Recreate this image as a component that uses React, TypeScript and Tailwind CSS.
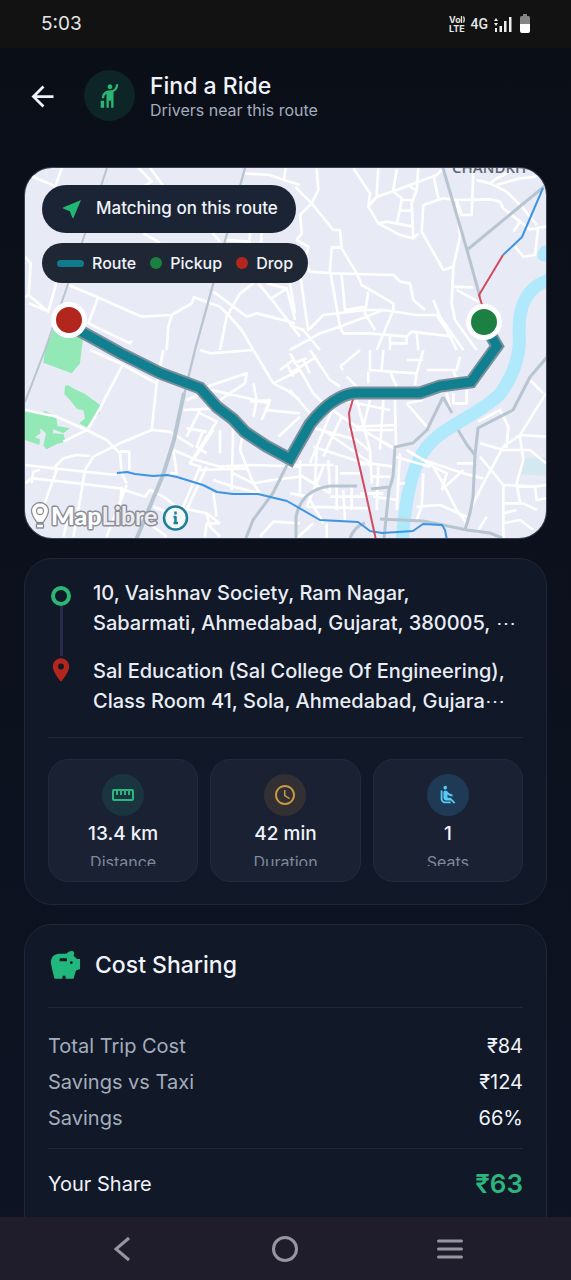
import type { ReactNode } from 'react';
import {
  MdAirlineSeatReclineNormal,
  MdArrowBack,
  MdHail,
  MdNearMe,
  MdPlace,
  MdSavings,
  MdSchedule,
  MdStraighten,
} from 'react-icons/md';

function StatusBar() {
  return (
    <div className="flex h-12 shrink-0 items-center justify-between bg-[#121212] px-[41px] text-[#e6e6e6]">
      <span className="text-[19px]">5:03</span>
      <div className="flex items-center gap-1.5">
        <svg width="16" height="18" viewBox="0 0 16 18" fill="#e6e6e6" aria-label="VoLTE">
          <text x="0" y="8" fontFamily="Inter, sans-serif" fontSize="9" fontWeight="700">Vo</text>
          <path d="M12.500 1v7M14.500 1.500q1.500 3 0 6" stroke="#e6e6e6" strokeWidth="1.300" fill="none" />
          <text x="0" y="17" fontFamily="Inter, sans-serif" fontSize="9" fontWeight="700">LTE</text>
        </svg>
        <span className="font-[Roboto,sans-serif] text-sm font-medium">4G</span>
        <svg width="18" height="18" viewBox="0 0 18 18" fill="#ededed" aria-hidden="true">
          <path d="M0 6l2-3 2 3zM0 8h4l-2 3zM1 13h2v4H1zM5.500 11H8v6H5.500zM10 6h2.500v11H10zM15 2h2.500v15H15z" />
        </svg>
        <svg className="ml-0.5" width="10" height="20" viewBox="0 0 10 20" aria-hidden="true">
          <path d="M3 0h4v2h1.500Q10 2 10 4v7H0V4q0-2 1.500-2H3z" fill="#858585" />
          <path d="M0 10h10v7q0 2-2 2H2q-2 0-2-2z" fill="#fff" />
        </svg>
      </div>
    </div>
  );
}

function CityMap() {
  return (
    <svg
      className="block h-full w-full"
      viewBox="25 168 521 370"
      preserveAspectRatio="xMidYMid slice"
      role="img"
      aria-label="Route map"
      fill="none"
      strokeLinejoin="round"
    >
      <rect x="0" y="140" width="600" height="430" fill="#e8eaf6" />

      {/* parks and lake */}
      <g transform="translate(20 350) scale(.33333)" fill="#93e9b6">
        <path d="M75 0L70 38L155 70L180 40L190-45L100-60Z" />
        <path d="M135 108L143 105L165 118L195 132L240 165L240 188L200 232L178 220L195 205L190 180L172 178L150 150L133 132Z" />
        <path d="M15 180L60 190L75 183L108 198L113 228L150 235L130 250L100 238L98 250L130 252L138 275L110 282L80 298L70 288L78 250L60 235L62 250L45 262L60 268L58 285L15 270Z" />
      </g>
      <path d="M522 459L546 457V476L520 474Z" fill="#d3e8f0" />

      {/* river */}
      <path d="M552 279C526 286 519 306 519 330C521 350 516 372 500 394C478 416 447 423 426 448C411 468 405 500 402 545" stroke="#b0e9fb" strokeWidth="13" />
      <path d="M550 243L541 247Q534 256 541 261L550 262Z" fill="#b0e9fb" />

      {/* streets */}
      <g stroke="#fff" strokeWidth="8">
        <path
          transform="translate(20 160) scale(.33333)"
          d="M126 23L104 85M15 40L104 78M355 23L395 65L370 80M390 23L430 78M675 40L750 45L792 60L840 75M797 23L792 60M370 220L420 248M575 215L600 245M620 240L690 245M690 215L688 248M725 215L723 248M15 290L32 310L26 405L15 412M26 405L85 455L110 365M26 430L80 452M145 375L230 410L365 470L455 465L515 430L522 412L600 440L625 465L665 510L700 570M235 410L205 490L330 550L335 542M455 465L445 500L440 570M700 370L660 400L620 470L600 570M580 395L680 470L710 460L750 470L825 490M715 370L760 425L810 490L840 530M740 370L800 385L755 415M800 385L815 440L825 480"
        />
        <path
          transform="translate(290 160) scale(.33333)"
          d="M190 25L240 100L235 140L265 190L330 225L370 235L385 220M265 25L260 105M235 140L260 110L320 90L440 45L455 30M310 95L335 115L330 150L320 190M335 120H365M330 152H365M385 25L380 90L365 130L370 235M265 190L290 185L370 200M355 75L375 90M320 28L310 90M430 45L445 115M395 215L400 135L460 115L500 120L600 118L630 125L640 145L690 185L720 208L768 200M395 215L460 330L490 320M550 35L545 165L515 165L500 120M560 60L600 70L650 95L700 145L740 195M600 70L620 55L660 35M620 75L690 55L740 50M500 120L510 230L490 320L485 430L495 480L560 570M690 185L670 215M745 200L735 285L700 290L675 260M490 380L550 382M500 390L565 425M80 25L85 90L65 130L30 165M15 80L65 130L130 210L150 210L155 265L200 340L215 375L310 430L310 450L260 570M30 160L35 220L20 240L55 260L45 300L60 335L130 340L310 345L330 365L360 370L370 420L405 450M155 262L125 262L120 330L150 500L160 520L240 520L350 530L365 515L490 530M155 345L165 450L230 440M30 340L50 480L55 510L100 465L225 450L280 450L380 465L440 465L470 510L500 570M235 395L225 460L255 510M0 370L15 460M0 570L90 520L150 500L280 450M430 420L450 470L520 570M0 495L40 510L90 570M300 530V570M300 550H350V530M380 520L385 570"
        />
        <path
          transform="translate(20 350) scale(.33333)"
          d="M210 0L300 40L410 100M310 40L240 175L205 235M15 180L110 200L200 240L260 270L300 310L305 370L320 400M430 0L410 100L395 240L300 280L220 320L195 360L175 480L160 560M130 275L200 240M395 240L450 245L520 290M15 345L100 355L290 375M100 355L130 325L170 315L210 318M35 400L40 365L60 360M15 400L35 385L130 395L300 415L375 440L390 420L430 440M110 360L70 470M300 305H328V360M320 405L260 560M305 410L300 470M430 440L470 470L560 490L600 520M150 480L130 560M540 0L570 10L700 0L760 100L800 120L840 150M560 110L680 70L675 100L600 150M550 115L620 130L750 160M760 100L840 60M780 60L820 30M800 40L820 80M700 100L710 150L700 200M750 150L725 210M690 155L750 150L740 180L840 190M490 180L590 175M500 150L560 125M540 180L500 260M540 190L590 215L510 340L540 350L490 470L450 540M500 235L560 245M550 240L530 290L560 310M600 240V310M640 220L635 420M580 240L520 330M460 300L530 330L600 350L700 345L840 350M460 300L470 370L450 370M560 350L500 480M670 240L660 300L700 400L720 430M640 370L700 400L760 390L840 380M580 430L590 500M580 390L640 410L720 430M600 520H560L555 560M560 490L570 530L600 560M720 560L760 515L840 520M775 260L840 200M540 360L680 355M400 470L450 490L490 470M360 500L440 560"
        />
        <path
          transform="translate(290 350) scale(.33333)"
          d="M315 150L318 290M120 175L200 230L320 300M200 230L320 225M175 240H310M130 170L60 340M0 345H130M30 375L120 430M70 290L240 345M100 240L250 345M60 230L200 270L235 300M140 345V480M115 330L120 430M80 300L75 400M150 370H210M160 420L165 510M185 410V480M120 440H230M0 430L60 440M50 470L240 475M60 450L100 520M240 300L245 400M205 345L240 340L310 350M240 380H300M350 300L400 330L520 370L580 385M400 330L430 350L470 420L500 480L530 520M400 370L395 470L380 510M455 420L520 360M380 470L450 465L530 500M350 160L415 235M350 160L400 150M470 130L480 175M430 350L470 370L455 420M545 470L580 400L640 290L690 255L768 130M565 215L630 180L655 230L650 290L640 290M570 320L640 405L735 410L768 405M640 405V565M570 280L640 300L720 300L768 340M690 255L768 260M690 260L700 330L680 400L690 460M735 410L740 450L768 445M640 460H700L740 480M720 90L760 130M0 10L30 60L70 130L110 170M0 70L80 20M40 30L60 70M60 0L120 90L150 110M150 50L210 0M150 50L160 60M240 0V60L300 65L380 70L400 0M235 65V100M300 65L320 110M380 70L375 105M280 0L275 60M350 30H400M0 120L60 190M490 130V160H530V120M410 60L500 60L510 20M240 150L220 230M280 150L270 300M155 150L300 180M155 200L100 320M200 150L240 300M30 330V440M100 350L50 470M210 430L280 430M265 350L260 480M315 320L420 350M330 310L320 480M320 400H345M250 440L320 450M640 520L690 510L730 540M640 490L680 480M550 340L500 340M70 520L20 565M110 520V565M590 500L560 550M10 40L50 25M170 80L200 110M490 60L500 90"
        />
      </g>

      {/* major roads and railways */}
      <g stroke="#b7c5d0">
        <path d="M107 168L66 290L45 350L25 402" strokeWidth="2" />
        <path d="M245 168L195 350L184 395" strokeWidth="2.300" />
        <path d="M184 393L174 440L163 475L136 540" strokeWidth="4" />
        <path d="M443 168L467 250L480 297M467 250L546 185" strokeWidth="3" />
        <path d="M287 465L273 493L253 520L246 538M296 538L296 517Q301 490 330 486H357M371 489L389 487M443 397L427 430L413 443L395 447L393 477L389 490L384 538M443 397L452 413M458 430L467 445L475 455L473 497L470 513L465 530M475 455L478 428L513 410L530 377L548 356M380 519L423 521L443 525L467 530L490 533L502 538M350 538Q355 526 365 523" strokeWidth="3" />
      </g>
      <path d="M117 473L127 472L135 474L153 476L167 475L177 477L203 485L217 492L233 494H258L287 501L320 520L358 522L370 531L382 533L413 531L423 524L442 525L445 530L447 540" stroke="#3d95e2" strokeWidth="2" />
      <path d="M543 188L522 237L503 255" stroke="#3d95e2" strokeWidth="2" />
      <path d="M503 255L479 295L483 308M353 399L349 413L350 425L365 490L376 540" stroke="#d14b5d" strokeWidth="2" />

      <text x="452" y="173" fill="#5d6570" fontFamily="Open Sans, sans-serif" fontSize="15" fontWeight="600">CHANDKH</text>

      {/* planned route */}
      <path d="M69 325L82 332L120 353L160 373L200 388L217 407L233 419L245 432L266 446L290 459L310 424Q333 395 355 393L420 393L440 386L471 382L497 346L490 334" stroke="#788f9c" strokeWidth="13" strokeLinejoin="miter" />
      <path d="M69 325L82 332L120 353L160 373L200 388L217 407L233 419L245 432L266 446L290 459L310 424Q333 395 355 393L420 393L440 386L471 382L497 346L490 334" stroke="#107f8f" strokeWidth="9" strokeLinejoin="miter" />
      <circle cx="69" cy="320" r="15.500" fill="#b3261e" stroke="#fff" strokeWidth="5" />
      <circle cx="484" cy="322" r="15.500" fill="#1b8041" stroke="#fff" strokeWidth="5" />

      {/* attribution */}
      <g stroke="#8d8f96" strokeWidth="1.300" fill="#fff">
        <path d="M40 502.500a8.500 8.500 0 0 1 8.500 8.500q0 4-5.500 11.500h-6q-5.500-7.500-5.500-11.500a8.500 8.500 0 0 1 8.500-8.500zM36.500 524h7v4h-7z" />
        <circle cx="40" cy="511" r="3.500" />
      </g>
      <text x="51" y="525" fontFamily="Lato, sans-serif" fontSize="25" stroke="#8d8f96" strokeWidth="3" paintOrder="stroke" fill="#fff">
        <tspan fontWeight="900">Map</tspan>
        <tspan fontWeight="700" fill="#ececf2">Libre</tspan>
      </text>
      <circle cx="175.500" cy="518" r="11.500" fill="#f5f8fb" stroke="#1f8294" strokeWidth="2.500" />
      <path d="M175.500 511.500v3M173.500 517h2v6.500M173.500 523h4.500" stroke="#1f8294" strokeWidth="2.500" />
    </svg>
  );
}

function Divider() {
  return <hr className="border-[#1f2738]" />;
}

function Stat({ icon, tint, value, label }: { icon: ReactNode; tint: string; value: string; label: string }) {
  return (
    <div className="flex flex-col items-center rounded-[20px] border border-[#222b3d] bg-[#192133] pt-3.5 pb-[15px]">
      <div className={`flex size-[42px] items-center justify-center rounded-full ${tint}`}>{icon}</div>
      <div className="mt-1.5 text-[19px] leading-6 font-medium text-[#f0f3fa]">{value}</div>
      <div className="mt-1 h-4 overflow-hidden text-base leading-6 text-[#7f899b]">{label}</div>
    </div>
  );
}

function CostRow({ label, value }: { label: string; value: string }) {
  return (
    <div className="flex items-center justify-between text-xl leading-9">
      <dt className="text-[#a4adbd]">{label}</dt>
      <dd className="text-[#f0f3fa]">{value}</dd>
    </div>
  );
}

export default function App() {
  return (
    <div className="flex h-screen flex-col bg-gradient-to-b from-[#0a0e17] to-[#0e1424] font-[Inter,'Noto_Sans',sans-serif]">
      <StatusBar />
      <header className="flex h-[119px] shrink-0 items-start px-[26px] pt-[22px]">
        <button aria-label="Back" className="mt-2.5 text-[#eff2fb]">
          <MdArrowBack size={33} />
        </button>
        <div className="ml-[25px] flex size-[51px] items-center justify-center rounded-full bg-[#0d2527] text-[#2bb673]">
          <MdHail size={28} />
        </div>
        <div className="ml-[15px] pt-0.5">
          <h1 className="text-[23px] leading-7 font-medium text-[#f0f3fa]">Find a Ride</h1>
          <p className="text-base leading-5 text-[#a4adbd]">Drivers near this route</p>
        </div>
      </header>

      <main className="flex min-h-0 flex-1 flex-col gap-[19px] overflow-y-auto px-6 [scrollbar-width:none]">
        <section className="relative h-[372px] shrink-0 overflow-hidden rounded-[28px] border border-[#3a4354]">
          <CityMap />
          <div className="absolute top-[17px] left-[17px] flex flex-col items-start gap-2.5">
            <div className="flex h-12 items-center gap-3 rounded-full bg-[#1b2434] px-[18px] text-[17px] font-medium text-[#f0f3fa]">
              <MdNearMe size={24} className="text-[#22b573]" />
              Matching on this route
            </div>
            <div className="flex h-10 items-center gap-3.5 rounded-full bg-[#1f2735] px-[15px] text-base font-medium text-[#f0f3fa]">
              <span className="flex items-center gap-2">
                <i className="h-[7px] w-[27px] rounded-full bg-[#107b8d]" />
                Route
              </span>
              <span className="flex items-center gap-2">
                <i className="size-3 rounded-full bg-[#1b8041]" />
                Pickup
              </span>
              <span className="flex items-center gap-2">
                <i className="size-3 rounded-full bg-[#b3261e]" />
                Drop
              </span>
            </div>
          </div>
        </section>

        <section className="shrink-0 rounded-[28px] border border-[#1f2738] bg-[#111827] px-[23px] pt-[19px] pb-[22px]">
          <div className="flex gap-[19px]">
            <div className="flex w-[26px] flex-col items-center pt-2">
              <i className="size-5 rounded-full border-4 border-[#2bb673]" />
              <i className="h-[50px] w-[3px] bg-[#292b48]" />
              <MdPlace size={28} className="text-[#b3261e]" />
            </div>
            <div className="min-w-0 flex-1 text-xl leading-[30px] font-medium whitespace-nowrap text-[#e9edf6]">
              <p>10, Vaishnav Society, Ram Nagar,<br />Sabarmati, Ahmedabad, Gujarat, 380005, ⋯</p>
              <p className="mt-[18px]">Sal Education (Sal College Of Engineering),<br />Class Room 41, Sola, Ahmedabad, Gujara⋯</p>
            </div>
          </div>
          <div className="mt-[21px]">
            <Divider />
          </div>
          <div className="mt-[21px] grid grid-cols-3 gap-3">
            <Stat icon={<MdStraighten size={24} className="text-[#2bb67d]" />} tint="bg-[#1a3440]" value="13.4 km" label="Distance" />
            <Stat icon={<MdSchedule size={24} className="text-[#c99a45]" />} tint="bg-[#323033]" value="42 min" label="Duration" />
            <Stat icon={<MdAirlineSeatReclineNormal size={22} className="text-[#58c8f5]" />} tint="bg-[#1e3a54]" value="1" label="Seats" />
          </div>
        </section>

        <section className="shrink-0 rounded-[28px] border border-[#1f2738] bg-[#111827] px-[23px] pt-[23px] pb-14">
          <div className="flex items-center gap-3">
            <MdSavings size={35} className="text-[#22b87d]" />
            <h2 className="text-[23px] leading-[35px] font-medium text-[#f0f3fa]">Cost Sharing</h2>
          </div>
          <div className="mt-6">
            <Divider />
          </div>
          <dl className="mt-5">
            <CostRow label="Total Trip Cost" value="₹84" />
            <CostRow label="Savings vs Taxi" value="₹124" />
            <CostRow label="Savings" value="66%" />
            <div className="mt-3">
              <Divider />
            </div>
            <div className="mt-[17px] flex items-center justify-between leading-9">
              <dt className="text-xl text-[#f0f3fa]">Your Share</dt>
              <dd className="text-[26px] font-semibold text-[#2bb67d]">₹63</dd>
            </div>
          </dl>
        </section>
      </main>

      <nav className="flex h-[63px] shrink-0 items-center justify-around bg-[#1f1d2b] px-[39px] text-[#97959f]">
        <button aria-label="Go back">
          <svg width="28" height="28" viewBox="0 0 28 28" fill="none" stroke="currentColor" strokeWidth="3"><path d="M22 3L9 14l13 11" /></svg>
        </button>
        <button aria-label="Home">
          <svg width="28" height="28" viewBox="0 0 28 28" fill="none" stroke="currentColor" strokeWidth="3"><circle cx="14" cy="14" r="11.500" /></svg>
        </button>
        <button aria-label="Recent apps">
          <svg width="28" height="28" viewBox="0 0 28 28" fill="none" stroke="currentColor" strokeWidth="3" strokeLinecap="round"><path d="M2.500 6h23M2.500 14h23M2.500 22h23" /></svg>
        </button>
      </nav>
    </div>
  );
}
